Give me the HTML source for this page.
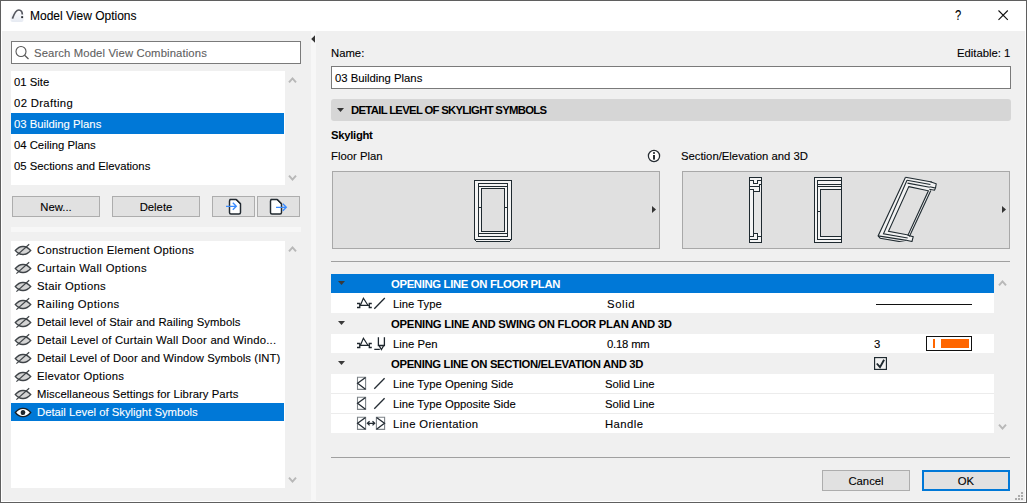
<!DOCTYPE html>
<html><head><meta charset="utf-8">
<style>
*{margin:0;padding:0;box-sizing:border-box}
html,body{width:1027px;height:503px;overflow:hidden;background:#f0f0f0}
body{position:relative;font-family:"Liberation Sans",sans-serif;font-size:11.3px;color:#000;-webkit-text-stroke:0.1px currentColor}
.a{position:absolute}
.t{position:absolute;white-space:nowrap;line-height:14px}
.b{font-weight:bold;-webkit-text-stroke:0}
.win{left:0;top:0;width:1027px;height:503px;border:1px solid #5f5f5f}
.title{left:1px;top:1px;width:1025px;height:30px;background:#fff}
.inner{left:1px;top:31px;width:1px;height:471px;background:#fff}
.list{background:#fff}
.row{position:absolute;left:0;white-space:nowrap}
.sel{background:#0078d7;color:#fff}
.btn{position:absolute;background:#e1e1e1;border:1px solid #adadad;text-align:center}
.sep{position:absolute;height:1px;background:#a0a0a0}
.chev{position:absolute}
</style></head><body>
<div class="a win"></div>
<div class="a title"></div>
<div class="a" style="left:1px;top:31px;width:1px;height:471px;background:#fff"></div>
<div class="a" style="left:1025px;top:31px;width:1px;height:471px;background:#fff"></div>
<div class="a" style="left:1px;top:501px;width:1025px;height:1px;background:#fff"></div>
<!-- title icon -->
<svg class="a" style="left:9px;top:8px" width="16" height="15" viewBox="0 0 16 15">
<defs><linearGradient id="tg" x1="0" y1="0" x2="0" y2="1"><stop offset="0" stop-color="#fbfbfd"/><stop offset="1" stop-color="#e6eaf2"/></linearGradient></defs>
<rect x="1.5" y="3" width="13" height="11" rx="2" fill="url(#tg)"/>
<path d="M3.4 10.6C5 6 7.5 2 9.8 2C12.2 2 13.3 3.6 13.3 6.6" fill="none" stroke="#55575f" stroke-width="1.7"/>
<rect x="12.2" y="8.2" width="1.9" height="1.9" fill="#2a2c30"/>
</svg>
<div class="t" style="left:30px;top:8px;font-size:12px;line-height:16px">Model View Options</div>
<div class="t" style="left:954.8px;top:6.5px;font-size:14px;line-height:16px;transform:scaleX(0.8);transform-origin:left">?</div>
<svg class="a" style="left:997px;top:9px" width="12" height="12" viewBox="0 0 12 12"><path d="M1.5 1.5L10.8 10.8M10.8 1.5L1.5 10.8" stroke="#111" stroke-width="1.1"/></svg>

<!-- LEFT PANEL -->
<div class="a" style="left:11px;top:41px;width:290px;height:23px;border:1px solid #7a7a7a;background:#fff"></div>
<svg class="a" style="left:14px;top:44px" width="18" height="18" viewBox="0 0 18 18"><circle cx="7" cy="7.5" r="5" fill="none" stroke="#555" stroke-width="1.1"/><path d="M10.6 11.2L14.5 15" stroke="#555" stroke-width="1.2"/></svg>
<div class="t" style="left:34px;top:44.5px;color:#606060;line-height:16px;letter-spacing:0.12px">Search Model View Combinations</div>

<div class="a list" style="left:11px;top:71px;width:274px;height:114px">
 <div class="row" style="top:0;width:274px;height:21px;line-height:23px;padding-left:3px">01 Site</div>
 <div class="row" style="top:21px;width:274px;height:21px;line-height:23px;padding-left:3px;letter-spacing:0.35px">02 Drafting</div>
 <div class="row sel" style="top:42px;width:273px;height:21px;line-height:23px;padding-left:3px">03 Building Plans</div>
 <div class="row" style="top:63px;width:274px;height:21px;line-height:23px;padding-left:3px">04 Ceiling Plans</div>
 <div class="row" style="top:84px;width:274px;height:21px;line-height:23px;padding-left:3px">05 Sections and Elevations</div>
</div>
<svg class="chev" style="left:288px;top:76px" width="9" height="8" viewBox="0 0 9 8"><path d="M1 6.3L4.5 2.4L8 6.3" fill="none" stroke="#b8b8b8" stroke-width="2"/></svg>
<svg class="chev" style="left:288px;top:173.5px" width="9" height="8" viewBox="0 0 9 8"><path d="M1 1.7L4.5 5.6L8 1.7" fill="none" stroke="#b8b8b8" stroke-width="2"/></svg>

<div class="btn" style="left:12px;top:196px;width:88px;height:21px;line-height:21px">New...</div>
<div class="btn" style="left:112px;top:196px;width:88px;height:21px;line-height:21px">Delete</div>
<div class="btn" style="left:212px;top:196px;width:43px;height:21px"></div>
<div class="btn" style="left:257px;top:196px;width:43px;height:21px"></div>
<svg class="a" style="left:211.5px;top:196px" width="44" height="21" viewBox="0 0 44 21">
<path d="M18 3.5H24.2L28.5 7.8V16.5Q28.5 18 27 18H19Q17.5 18 17.5 16.5V5Q17.5 3.5 19 3.5Z" fill="#fff" stroke="#222a31" stroke-width="1.45" stroke-linejoin="round"/>
<path d="M24.2 3.5L28.5 7.8" fill="none" stroke="#222a31" stroke-width="1.2"/>
<path d="M14 10.3H24.3M20.8 6.8L24.3 10.3L20.8 13.8" fill="none" stroke="#3b8cff" stroke-width="1.35"/>
</svg>
<svg class="a" style="left:256.5px;top:196px" width="44" height="21" viewBox="0 0 44 21">
<path d="M14 3.5H20.2L24.5 7.8V16.5Q24.5 18 23 18H15Q13.5 18 13.5 16.5V5Q13.5 3.5 15 3.5Z" fill="#fff" stroke="#222a31" stroke-width="1.45" stroke-linejoin="round"/>
<path d="M20.2 3.5L24.5 7.8" fill="none" stroke="#222a31" stroke-width="1.2"/>
<path d="M19 11.3H29.3M25.8 7.8L29.3 11.3L25.8 14.8" fill="none" stroke="#3b8cff" stroke-width="1.35"/>
</svg>

<div class="a" style="left:11px;top:227px;width:290px;height:5px;background:#f7f7f7"></div>

<div class="a list" style="left:11px;top:241px;width:274px;height:247px">
 <div class="row" style="top:0px;width:273px;height:18px;line-height:18px"><svg class="a" style="left:3px;top:2px" width="18" height="14" viewBox="0 0 18 14"><path d="M1.3 7.5Q5 3.3 9 3.5Q13 3.3 16.7 7.5Q13 11.7 9 11.5Q5 11.7 1.3 7.5Z" fill="#d4d4d4" stroke="#3f4448" stroke-width="1.3"/><path d="M2.4 12.6L15.2 1.3" stroke="#3f4448" stroke-width="1.2"/></svg><span class="a" style="left:26px;top:0;letter-spacing:0.25px">Construction Element Options</span></div>
 <div class="row" style="top:18px;width:273px;height:18px;line-height:18px"><svg class="a" style="left:3px;top:2px" width="18" height="14" viewBox="0 0 18 14"><path d="M1.3 7.5Q5 3.3 9 3.5Q13 3.3 16.7 7.5Q13 11.7 9 11.5Q5 11.7 1.3 7.5Z" fill="#d4d4d4" stroke="#3f4448" stroke-width="1.3"/><path d="M2.4 12.6L15.2 1.3" stroke="#3f4448" stroke-width="1.2"/></svg><span class="a" style="left:26px;top:0;letter-spacing:0.34px">Curtain Wall Options</span></div>
 <div class="row" style="top:36px;width:273px;height:18px;line-height:18px"><svg class="a" style="left:3px;top:2px" width="18" height="14" viewBox="0 0 18 14"><path d="M1.3 7.5Q5 3.3 9 3.5Q13 3.3 16.7 7.5Q13 11.7 9 11.5Q5 11.7 1.3 7.5Z" fill="#d4d4d4" stroke="#3f4448" stroke-width="1.3"/><path d="M2.4 12.6L15.2 1.3" stroke="#3f4448" stroke-width="1.2"/></svg><span class="a" style="left:26px;top:0;letter-spacing:0.28px">Stair Options</span></div>
 <div class="row" style="top:54px;width:273px;height:18px;line-height:18px"><svg class="a" style="left:3px;top:2px" width="18" height="14" viewBox="0 0 18 14"><path d="M1.3 7.5Q5 3.3 9 3.5Q13 3.3 16.7 7.5Q13 11.7 9 11.5Q5 11.7 1.3 7.5Z" fill="#d4d4d4" stroke="#3f4448" stroke-width="1.3"/><path d="M2.4 12.6L15.2 1.3" stroke="#3f4448" stroke-width="1.2"/></svg><span class="a" style="left:26px;top:0;letter-spacing:0.4px">Railing Options</span></div>
 <div class="row" style="top:72px;width:273px;height:18px;line-height:18px"><svg class="a" style="left:3px;top:2px" width="18" height="14" viewBox="0 0 18 14"><path d="M1.3 7.5Q5 3.3 9 3.5Q13 3.3 16.7 7.5Q13 11.7 9 11.5Q5 11.7 1.3 7.5Z" fill="#d4d4d4" stroke="#3f4448" stroke-width="1.3"/><path d="M2.4 12.6L15.2 1.3" stroke="#3f4448" stroke-width="1.2"/></svg><span class="a" style="left:26px;top:0;letter-spacing:0.08px">Detail level of Stair and Railing Symbols</span></div>
 <div class="row" style="top:90px;width:273px;height:18px;line-height:18px"><svg class="a" style="left:3px;top:2px" width="18" height="14" viewBox="0 0 18 14"><path d="M1.3 7.5Q5 3.3 9 3.5Q13 3.3 16.7 7.5Q13 11.7 9 11.5Q5 11.7 1.3 7.5Z" fill="#d4d4d4" stroke="#3f4448" stroke-width="1.3"/><path d="M2.4 12.6L15.2 1.3" stroke="#3f4448" stroke-width="1.2"/></svg><span class="a" style="left:26px;top:0;letter-spacing:0.2px">Detail Level of Curtain Wall Door and Windo...</span></div>
 <div class="row" style="top:108px;width:273px;height:18px;line-height:18px"><svg class="a" style="left:3px;top:2px" width="18" height="14" viewBox="0 0 18 14"><path d="M1.3 7.5Q5 3.3 9 3.5Q13 3.3 16.7 7.5Q13 11.7 9 11.5Q5 11.7 1.3 7.5Z" fill="#d4d4d4" stroke="#3f4448" stroke-width="1.3"/><path d="M2.4 12.6L15.2 1.3" stroke="#3f4448" stroke-width="1.2"/></svg><span class="a" style="left:26px;top:0;letter-spacing:0.08px">Detail Level of Door and Window Symbols (INT)</span></div>
 <div class="row" style="top:126px;width:273px;height:18px;line-height:18px"><svg class="a" style="left:3px;top:2px" width="18" height="14" viewBox="0 0 18 14"><path d="M1.3 7.5Q5 3.3 9 3.5Q13 3.3 16.7 7.5Q13 11.7 9 11.5Q5 11.7 1.3 7.5Z" fill="#d4d4d4" stroke="#3f4448" stroke-width="1.3"/><path d="M2.4 12.6L15.2 1.3" stroke="#3f4448" stroke-width="1.2"/></svg><span class="a" style="left:26px;top:0;letter-spacing:0.22px">Elevator Options</span></div>
 <div class="row" style="top:144px;width:273px;height:18px;line-height:18px"><svg class="a" style="left:3px;top:2px" width="18" height="14" viewBox="0 0 18 14"><path d="M1.3 7.5Q5 3.3 9 3.5Q13 3.3 16.7 7.5Q13 11.7 9 11.5Q5 11.7 1.3 7.5Z" fill="#d4d4d4" stroke="#3f4448" stroke-width="1.3"/><path d="M2.4 12.6L15.2 1.3" stroke="#3f4448" stroke-width="1.2"/></svg><span class="a" style="left:26px;top:0;letter-spacing:0.06px">Miscellaneous Settings for Library Parts</span></div>
 <div class="row sel" style="top:162px;width:273px;height:18px;line-height:18px"><svg class="a" style="left:3px;top:2px" width="18" height="14" viewBox="0 0 18 14"><path d="M1.3 7.5Q5 3.2 9 3.4Q13 3.2 16.7 7.5Q13 11.8 9 11.6Q5 11.8 1.3 7.5Z" fill="#fff" stroke="#1a1f24" stroke-width="1.3"/><ellipse cx="9" cy="7.5" rx="2.3" ry="2.6" fill="#1e262d"/></svg><span class="a" style="left:26px;top:0">Detail Level of Skylight Symbols</span></div>
</div>
<svg class="chev" style="left:288px;top:245px" width="9" height="8" viewBox="0 0 9 8"><path d="M1 6.3L4.5 2.4L8 6.3" fill="none" stroke="#b8b8b8" stroke-width="2"/></svg>
<svg class="chev" style="left:288px;top:476px" width="9" height="8" viewBox="0 0 9 8"><path d="M1 1.7L4.5 5.6L8 1.7" fill="none" stroke="#b8b8b8" stroke-width="2"/></svg>

<!-- splitter -->
<div class="a" style="left:311px;top:31px;width:5px;height:471px;background:#f7f7f7"></div>
<svg class="a" style="left:309px;top:34px" width="8" height="10" viewBox="0 0 8 10"><path d="M6 1.2L2.2 5L6 8.8Z" fill="#333"/></svg>

<!-- RIGHT PANEL -->
<div class="t" style="left:331px;top:46px">Name:</div>
<div class="t" style="left:957px;top:46px">Editable: 1</div>
<div class="a" style="left:331px;top:66px;width:680px;height:23px;border:1px solid #7a7a7a;background:#fff"></div>
<div class="t" style="left:335px;top:71px">03 Building Plans</div>
<div class="a" style="left:331px;top:99px;width:680px;height:22px;background:#d6d6d6;border-radius:3px"></div>
<svg class="a" style="left:336px;top:107px" width="9" height="6" viewBox="0 0 9 6"><path d="M1 1H8L4.5 5Z" fill="#333"/></svg>
<div class="t b" style="left:351px;top:103px;letter-spacing:-0.68px">DETAIL LEVEL OF SKYLIGHT SYMBOLS</div>
<div class="t b" style="left:331px;top:128px;letter-spacing:-0.3px">Skylight</div>
<div class="t" style="left:331px;top:149px">Floor Plan</div>
<div class="t" style="left:681px;top:149px">Section/Elevation and 3D</div>

<div class="a" style="left:332px;top:171px;width:328px;height:78px;background:#e0e0e0;border:1px solid #a8a8a8"></div>
<div class="a" style="left:682px;top:171px;width:328px;height:78px;background:#e0e0e0;border:1px solid #a8a8a8"></div>

<svg class="a" style="left:644px;top:146px" width="20" height="20" viewBox="0 0 20 20"><circle cx="10" cy="10" r="5.6" fill="#fff" stroke="#262d33" stroke-width="1.25"/><rect x="9" y="6.2" width="2" height="1.6" fill="#262d33"/><rect x="9" y="9" width="2" height="4.6" fill="#262d33"/></svg>
<svg class="a" style="left:650px;top:204px" width="8" height="11" viewBox="0 0 8 11"><path d="M2 2L6 5.5L2 9Z" fill="#333"/></svg>
<svg class="a" style="left:1000px;top:204px" width="8" height="11" viewBox="0 0 8 11"><path d="M2 2L6 5.5L2 9Z" fill="#333"/></svg>
<svg class="a" style="left:468px;top:175px" width="50" height="70" viewBox="468 175 50 70" fill="none" stroke="#1f2a30" stroke-width="1" shape-rendering="crispEdges">
<rect x="474.5" y="180.5" width="37" height="59" fill="#f4f4f4"/>
<rect x="481.5" y="188.5" width="23" height="43" fill="#e0e0e0"/>
<path d="M478.5 236.5V183.5H507.5V236.5ZM478.5 186.5H507.5M478.5 233.5H507.5M478 207.5H481M504 207.5H507"/>
<path d="M475 240.5H511" stroke="#f4f4f4"/>
<path d="M476 241.5H510" />
<path d="M474.5 239.5L476.5 241.5M511.5 239.5L509.5 241.5" shape-rendering="auto"/>
</svg>
<svg class="a" style="left:740px;top:175px" width="30" height="70" viewBox="740 175 30 70" fill="none" stroke="#1f2a30" stroke-width="1" shape-rendering="crispEdges">
<rect x="749.5" y="177.5" width="12" height="65" fill="#f4f4f4"/>
<rect x="754" y="192" width="6.5" height="41" fill="#e6e6e6" stroke="none"/>
<path d="M749 180.5H753.5V183.5H757.5V180.5H761"/>
<path d="M759 184.5H761M759.5 184V191.5H753.5"/>
<path d="M749 186.5H759.5"/>
<path d="M749 189.5H753.5V236.5H749"/>
<path d="M753.5 233.5H757.5V239.5H749M757.5 236.5H761"/>
</svg>
<svg class="a" style="left:805px;top:175px" width="45" height="70" viewBox="805 175 45 70" fill="none" stroke="#1f2a30" stroke-width="1" shape-rendering="crispEdges">
<rect x="814.5" y="177.5" width="27" height="65" fill="#f4f4f4"/>
<rect x="820.5" y="189.5" width="21" height="47" fill="#e0e0e0"/>
<path d="M841 180.5H817.5V239.5H841M817 184.5H841M817 186.5H841M817 211.5H820"/>
</svg>
<svg class="a" style="left:872px;top:172px" width="70" height="70" viewBox="0 0 70 70" fill="none" stroke="#1f2a30" stroke-width="1.1">
<path d="M33.5 5.3L59.8 10L64.2 11.8L63.5 16L58.8 18.6L37.4 64.5L41.2 64.6L40 69.5L8.2 66.2L6.1 63.9Z" fill="#f2f2f2" stroke="none"/>
<path d="M33.5 5.3L59.8 10"/>
<path d="M33.5 5.3L6.1 63.9L8.2 66.2L33.5 70.6"/>
<path d="M6.1 63.9L34.5 68.4"/>
<path d="M35 8.3L58.4 12.5"/>
<path d="M35 8.3L11.5 61.8L35.7 66"/>
<path d="M35.5 11.1L57.7 15.3"/>
<path d="M36.8 14.6L56.4 18.8L36.1 63L16.5 59.3Z" fill="#e0e0e0"/>
<path d="M58.8 18.4L37.4 64.5"/>
<path d="M58.4 9.7L64.2 11.8L63.5 16L57.7 14.8M63.5 16L62.5 18.2L57.3 17.2"/>
<path d="M35.5 63.3L41.2 64.6L40 69.5L34.2 68.3"/>
</svg>
<div class="sep" style="left:331px;top:261px;width:679px"></div>

<div class="a" style="left:331px;top:274px;width:663px;height:159px;background:#fff"></div>
<div class="a" style="left:331px;top:274px;width:663px;height:19px;background:#0078d7"></div>
<svg class="a" style="left:337px;top:280px" width="9" height="6" viewBox="0 0 9 6"><path d="M1 1H8L4.5 5Z" fill="#3a3a3a"/></svg>
<div class="t b" style="left:391px;top:277px;color:#fff;letter-spacing:-0.33px">OPENING LINE ON FLOOR PLAN</div>
<svg class="a" style="left:352px;top:294px" width="40" height="20" viewBox="0 0 40 20" fill="none"><g stroke="#1e262d" stroke-width="1.3"><path d="M5 9.5H7.75V13.5H5M19.8 9.5H17.3V13.5H19.8M7.75 11.4H17.3"/><path d="M8.4 11.3L11.4 4.2L15.9 11.3" stroke-width="1.2"/><path d="M22.3 14.7L32.8 4"/></g></svg>
<div class="t" style="left:393px;top:297px">Line Type</div>
<div class="t" style="left:607px;top:297px;letter-spacing:0.6px">Solid</div>
<div class="a" style="left:876px;top:304px;width:96px;height:1px;background:#111"></div>
<div class="a" style="left:331px;top:313px;width:663px;height:21px;background:#f0f0f0"></div>
<svg class="a" style="left:337px;top:320px" width="9" height="6" viewBox="0 0 9 6"><path d="M1 1H8L4.5 5Z" fill="#3a3a3a"/></svg>
<div class="t b" style="left:391px;top:317px;letter-spacing:-0.24px">OPENING LINE AND SWING ON FLOOR PLAN AND 3D</div>
<svg class="a" style="left:352px;top:334px" width="40" height="20" viewBox="0 0 40 20" fill="none"><g stroke="#1e262d" stroke-width="1.3"><path d="M5 9.5H7.75V13.5H5M19.8 9.5H17.3V13.5H19.8M7.75 11.4H17.3"/><path d="M8.4 11.3L11.4 4.2L15.9 11.3" stroke-width="1.2"/><path d="M26.4 3.2V11.5H32.4V3.2M27 11.5L29.4 15.5L31.8 11.5M22.3 15.3H27.8" stroke-width="1.3"/></g></svg>
<div class="t" style="left:393px;top:337px">Line Pen</div>
<div class="t" style="left:607px;top:337px;letter-spacing:-0.2px">0.18 mm</div>
<div class="t" style="left:874px;top:337px">3</div>
<div class="a" style="left:926px;top:336px;width:46px;height:15px;border:1.5px solid #111;background:#fff"></div>
<div class="a" style="left:933px;top:339px;width:2px;height:9px;background:#ff6600"></div>
<div class="a" style="left:941px;top:339px;width:28px;height:9px;background:#ff6600"></div>
<div class="a" style="left:331px;top:353px;width:663px;height:21px;background:#f0f0f0"></div>
<svg class="a" style="left:337px;top:360px" width="9" height="6" viewBox="0 0 9 6"><path d="M1 1H8L4.5 5Z" fill="#3a3a3a"/></svg>
<div class="t b" style="left:391px;top:357px;letter-spacing:-0.33px">OPENING LINE ON SECTION/ELEVATION AND 3D</div>
<svg class="a" style="left:874px;top:357px" width="13" height="13" viewBox="0 0 13 13"><rect x="0.6" y="0.6" width="11.8" height="11.8" fill="#fff" stroke="#1f2a30" stroke-width="1.2"/><rect x="2" y="2" width="9" height="9" fill="#f3f3f3"/><path d="M2.8 6.5L6 10.2L10.1 2.8" fill="none" stroke="#1f2a30" stroke-width="1.9"/></svg>
<div class="a" style="left:331px;top:393px;width:663px;height:1px;background:#ececec"></div>
<div class="a" style="left:331px;top:413px;width:663px;height:1px;background:#ececec"></div>
<svg class="a" style="left:352px;top:374px" width="40" height="20" viewBox="0 0 40 20" fill="none"><path d="M5.5 3.3H13.6V15.4H5.5Z" stroke="#7d8388" stroke-width="1.1"/><path d="M13.5 3.4L5.6 9.3L13.5 15.3" stroke="#252d34" stroke-width="1.3"/><path d="M22.3 14.7L32.6 4.2" stroke="#252d34" stroke-width="1.3"/></svg>
<div class="t" style="left:393px;top:377px">Line Type Opening Side</div>
<div class="t" style="left:605px;top:377px">Solid Line</div>
<svg class="a" style="left:352px;top:394px" width="40" height="20" viewBox="0 0 40 20" fill="none"><path d="M5.5 3.3H13.6V15.4H5.5Z" stroke="#7d8388" stroke-width="1.1"/><path d="M13.5 3.4L5.6 9.3L13.5 15.3" stroke="#252d34" stroke-width="1.3"/><path d="M22.3 14.7L32.6 4.2" stroke="#252d34" stroke-width="1.3"/></svg>
<div class="t" style="left:393px;top:397px">Line Type Opposite Side</div>
<div class="t" style="left:605px;top:397px">Solid Line</div>
<svg class="a" style="left:352px;top:414px" width="40" height="20" viewBox="0 0 40 20" fill="none"><path d="M5.5 3.3H13.6V15.4H5.5Z" stroke="#7d8388" stroke-width="1.1"/><path d="M13.5 3.4L5.6 9.3L13.5 15.3" stroke="#252d34" stroke-width="1.3"/><path d="M15.5 9.3H22.6M17.6 7.2L15.4 9.3L17.6 11.4M20.5 7.2L22.7 9.3L20.5 11.4" stroke="#252d34" stroke-width="1.3"/><path d="M24.4 3.3H32.6V15.4H24.4Z" stroke="#7d8388" stroke-width="1.1"/><path d="M24.5 3.4L32.5 9.3L24.5 15.3" stroke="#252d34" stroke-width="1.3"/></svg>
<div class="t" style="left:393px;top:417px;letter-spacing:0.36px">Line Orientation</div>
<div class="t" style="left:605px;top:417px;letter-spacing:0.45px">Handle</div>
<svg class="chev" style="left:998px;top:278.5px" width="9" height="8" viewBox="0 0 9 8"><path d="M1 6.3L4.5 2.4L8 6.3" fill="none" stroke="#b8b8b8" stroke-width="2"/></svg>
<svg class="chev" style="left:998px;top:422.5px" width="9" height="8" viewBox="0 0 9 8"><path d="M1 1.7L4.5 5.6L8 1.7" fill="none" stroke="#b8b8b8" stroke-width="2"/></svg>

<div class="sep" style="left:331px;top:457px;width:679px"></div>

<div class="btn" style="left:822px;top:470px;width:88px;height:21px;line-height:21px">Cancel</div>
<div class="btn" style="left:922px;top:470px;width:88px;height:21px;line-height:19px;border:2px solid #0078d7">OK</div>
<svg class="a" style="left:1014px;top:490px" width="12" height="12" viewBox="0 0 12 12" fill="#ababab"><rect x="7" y="2" width="2" height="2"/><rect x="4" y="5" width="2" height="2"/><rect x="7" y="5" width="2" height="2"/><rect x="1" y="8" width="2" height="2"/><rect x="4" y="8" width="2" height="2"/><rect x="7" y="8" width="2" height="2"/></svg>
</body></html>
